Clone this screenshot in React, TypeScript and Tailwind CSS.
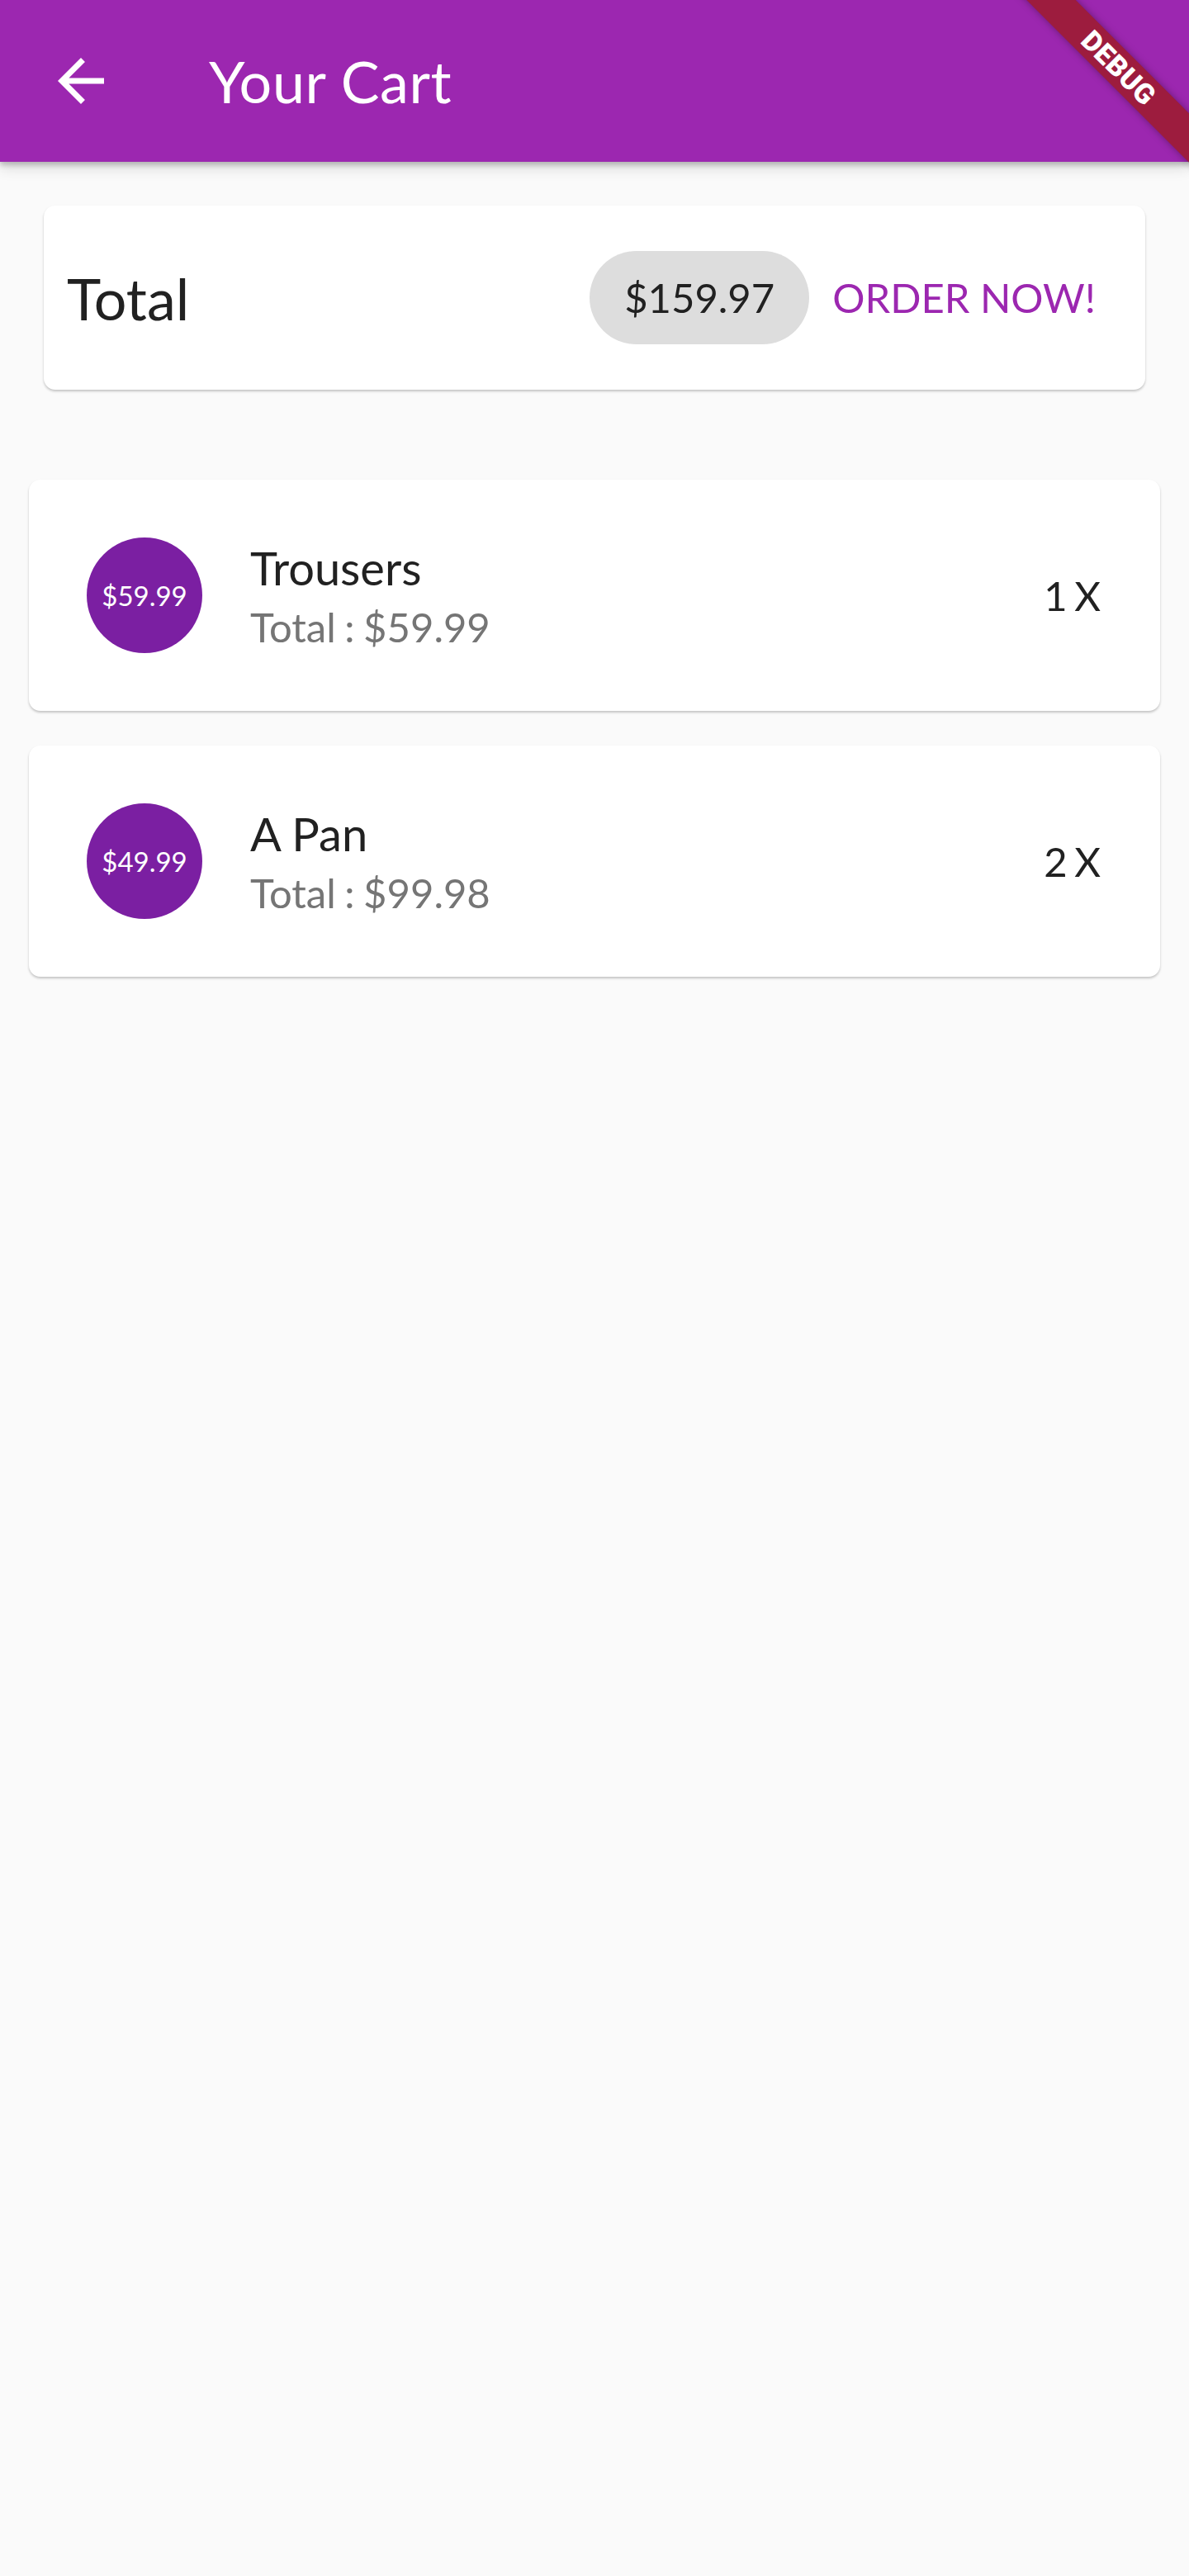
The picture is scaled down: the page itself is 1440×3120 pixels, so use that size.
import React from 'react';

type CartLine = {
  id: string;
  title: string;
  price: number;
  quantity: number;
};

const lines: CartLine[] = [
  { id: 'p1', title: 'Trousers', price: 59.99, quantity: 1 },
  { id: 'p2', title: 'A Pan', price: 49.99, quantity: 2 },
];

const ArrowBack = () => (
  <svg viewBox="0 0 24 24" className="h-[84px] w-[84px] fill-white">
    <path d="M20 11H7.83l5.59-5.59L12 4l-8 8 8 8 1.41-1.41L7.83 13H20v-2z" />
  </svg>
);

const DebugBanner = () => (
  <div className="pointer-events-none absolute left-[1185px] top-[61px] z-20 flex h-[42px] w-[340px] rotate-45 items-center justify-center bg-[#9d1c3e] shadow-[0_0_10px_rgba(0,0,0,0.35)]">
    <span className="font-['Roboto',sans-serif] text-[34px] font-black leading-none tracking-[0.5px] text-white">
      DEBUG
    </span>
  </div>
);

const CartItem: React.FC<{ line: CartLine; first?: boolean }> = ({ line, first }) => (
  <div
    className={`mx-[35px] flex h-[280px] items-center rounded-[14px] bg-white pl-[70px] pr-[72px] shadow-[0_2px_3px_rgba(0,0,0,0.22)] ${
      first ? 'mt-[109px]' : 'mt-[42px]'
    }`}
  >
    <div className="flex h-[140px] w-[140px] shrink-0 items-center justify-center rounded-full bg-[#7b1fa2]">
      <span className="text-[33px] leading-none text-white">${line.price.toFixed(2)}</span>
    </div>
    <div className="ml-[58px] flex flex-1 flex-col">
      <span className="text-[56px] leading-[67px] text-[#212121]">{line.title}</span>
      <span className="mt-[9px] text-[49px] leading-[59px] text-[#757575] [word-spacing:-2px]">
        Total : ${(line.price * line.quantity).toFixed(2)}
      </span>
    </div>
    <span className="text-[49px] leading-[59px] text-[#212121] [word-spacing:-4px]">{line.quantity} X</span>
  </div>
);

export default function App() {
  const total = lines.reduce((sum, l) => sum + l.price * l.quantity, 0);

  return (
    <div className="relative min-h-[3120px] w-full overflow-hidden bg-[#fafafa] font-['Lato',sans-serif]">
      <DebugBanner />

      <header className="relative z-10 flex h-[196px] items-center bg-[#9c27b0] pl-[56px] shadow-[0_4px_6px_rgba(0,0,0,0.2),0_8px_16px_rgba(0,0,0,0.12)]">
        <ArrowBack />
        <h1 className="ml-[113px] text-[70px] leading-none tracking-[0.6px] text-white">Your Cart</h1>
      </header>

      <main>
        <div className="mx-[53px] mt-[53px] flex h-[223px] items-center rounded-[14px] bg-white pl-[28px] pr-[60px] shadow-[0_2px_3px_rgba(0,0,0,0.22)]">
          <span className="text-[70px] leading-none text-[#212121]">Total</span>
          <div className="flex-1" />
          <div className="flex h-[113px] items-center rounded-full bg-[#dddddd] px-[42px]">
            <span className="text-[49px] leading-none text-[#212121]">${total.toFixed(2)}</span>
          </div>
          <button className="ml-[28px] text-[49px] uppercase leading-none text-[#9c27b0]">
            Order now!
          </button>
        </div>

        {lines.map((line, i) => (
          <CartItem key={line.id} line={line} first={i === 0} />
        ))}
      </main>
    </div>
  );
}
